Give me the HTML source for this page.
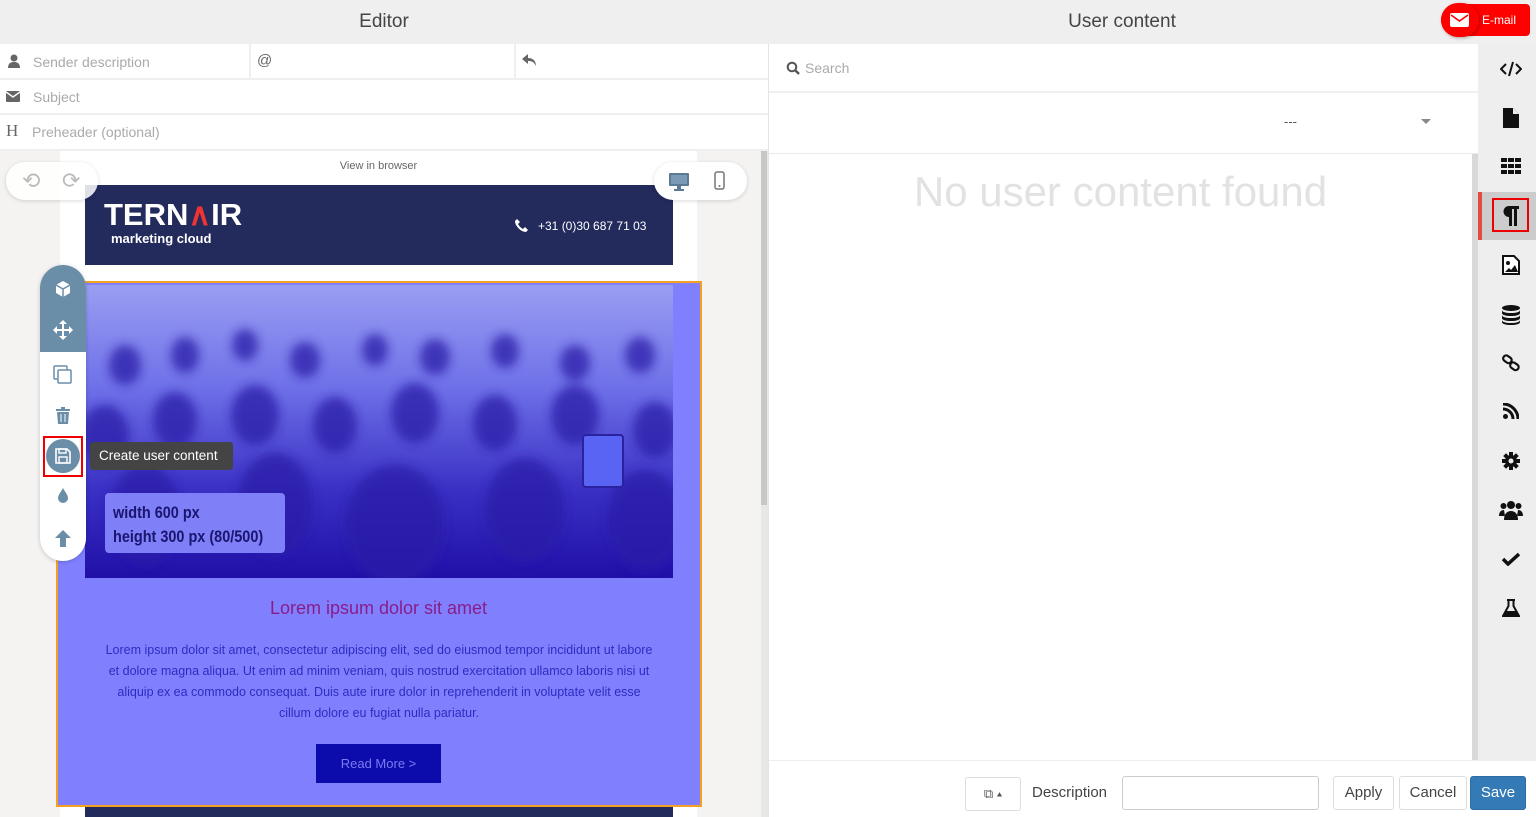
<!DOCTYPE html>
<html><head><meta charset="utf-8"><style>
*{box-sizing:border-box;margin:0;padding:0}
body{width:1536px;height:817px;overflow:hidden;font-family:"Liberation Sans",sans-serif;background:#fff;position:relative}
.a{position:absolute}
.hdr{background:#efefef;color:#444;font-size:19px;text-align:center;line-height:44px;height:44px}
.row{background:#fff;border-bottom:2px solid #efefef;color:#aaa;font-size:14px}
.btn{border:1px solid #ddd;border-radius:3px;background:#fff;font-size:15px;color:#444;text-align:center;line-height:32px;height:34px}
</style></head><body>
<div class="a hdr" style="left:0;top:0;width:768px">Editor</div>
<div class="a row" style="left:0;top:44px;width:768px;height:36px"></div>
<div class="a" style="left:249px;top:44px;width:2px;height:34px;background:#efefef"></div>
<div class="a" style="left:514px;top:44px;width:2px;height:34px;background:#efefef"></div>
<svg class="a" style="left:8px;top:54px" width="12" height="14" viewBox="0 0 12 14"><circle cx="6" cy="4" r="3.5" fill="#666"/><path d="M0 14c0-5 3-6 6-6s6 1 6 6z" fill="#666"/></svg>
<div class="a" style="left:33px;top:54px;font-size:14px;color:#aaa">Sender description</div>
<div class="a" style="left:257px;top:52px;font-size:15px;color:#666">@</div>
<svg class="a" style="left:522px;top:54px" width="14" height="12" viewBox="0 0 14 12"><path d="M6 0L0 5l6 5V7c4 0 6 1 8 5 0-5-3-8-8-8z" fill="#666"/></svg>
<div class="a row" style="left:0;top:80px;width:768px;height:35px"></div>
<svg class="a" style="left:6px;top:91px" width="14" height="11" viewBox="0 0 14 11"><rect width="14" height="11" rx="1" fill="#666"/><path d="M0 1l7 5 7-5" stroke="#fff" stroke-width="1.5" fill="none"/></svg>
<div class="a" style="left:33px;top:89px;font-size:14px;color:#aaa">Subject</div>
<div class="a row" style="left:0;top:115px;width:768px;height:36px"></div>
<div class="a" style="left:6px;top:121px;font-size:17px;color:#666;font-family:'Liberation Serif',serif">H</div>
<div class="a" style="left:32px;top:124px;font-size:14px;color:#aaa">Preheader (optional)</div>
<div class="a" style="left:0;top:151px;width:761px;height:666px;background:#f4f3f1"></div>
<div class="a" style="left:761px;top:151px;width:7px;height:666px;background:#e8e8e8"></div>
<div class="a" style="left:761px;top:151px;width:6px;height:354px;background:#c8c8c8"></div>
<div class="a" style="left:60px;top:151px;width:637px;height:666px;background:#fff"></div>
<div class="a" style="left:60px;top:160px;width:637px;text-align:center;font-size:11px;color:#666">View in browser</div>
<div class="a" style="left:85px;top:185px;width:588px;height:80px;background:#232a5c"></div>
<div class="a" style="left:104px;top:198px;font-size:31px;font-weight:bold;color:#fff;line-height:34px">TERN<span style="color:#e33">∧</span>IR</div>
<div class="a" style="left:111px;top:231px;font-size:13px;font-weight:bold;color:#fff">marketing cloud</div>
<svg class="a" style="left:515px;top:219px" width="13" height="13" viewBox="0 0 13 13"><path d="M2 0l3 3-2 2c1 2 3 4 5 5l2-2 3 3-2 2C6 13 0 7 0 2z" fill="#fff"/></svg>
<div class="a" style="left:538px;top:219px;font-size:12px;color:#fff">+31 (0)30 687 71 03</div>
<div class="a" style="left:6px;top:162px;width:92px;height:38px;border-radius:19px;background:rgba(255,255,255,.85);box-shadow:0 1px 4px rgba(0,0,0,.15)"></div>
<div class="a" style="left:22px;top:168px;font-size:22px;color:#bbb">⟲</div>
<div class="a" style="left:62px;top:168px;font-size:22px;color:#bbb">⟳</div>
<div class="a" style="left:654px;top:162px;width:93px;height:38px;border-radius:19px;background:#fff;box-shadow:0 1px 4px rgba(0,0,0,.15)"></div>
<svg class="a" style="left:668px;top:172px" width="22" height="19" viewBox="0 0 22 19"><rect x="1" y="1" width="20" height="13" rx="1" fill="#5a7a96"/><rect x="3" y="3" width="16" height="9" fill="#7a9ab6"/><rect x="9" y="14" width="4" height="3" fill="#5a7a96"/><rect x="6" y="17" width="10" height="2" fill="#5a7a96"/></svg>
<svg class="a" style="left:714px;top:171px" width="11" height="19" viewBox="0 0 11 19"><rect x="1" y="1" width="9" height="17" rx="2" fill="none" stroke="#777" stroke-width="1.5"/><circle cx="5.5" cy="15" r="1" fill="#777"/></svg>
<div class="a" style="left:56px;top:281px;width:646px;height:526px;border:2px solid #f4a020;background:#8080ff"></div>
<svg class="a" style="left:85px;top:285px" width="588" height="293" viewBox="0 0 588 293">
<defs><linearGradient id="g" x1="0" y1="0" x2="0" y2="1"><stop offset="0" stop-color="#9a9ef2"/><stop offset=".35" stop-color="#6e70e8"/><stop offset=".7" stop-color="#3a30c4"/><stop offset="1" stop-color="#2010a8"/></linearGradient><filter id="b"><feGaussianBlur stdDeviation="5"/></filter></defs>
<rect width="588" height="293" fill="url(#g)"/>
<g filter="url(#b)" fill="#2a1aa8" opacity=".75">
<ellipse cx="40" cy="80" rx="16" ry="20"/><ellipse cx="100" cy="70" rx="14" ry="18"/><ellipse cx="160" cy="60" rx="13" ry="16"/><ellipse cx="220" cy="75" rx="15" ry="18"/><ellipse cx="290" cy="65" rx="13" ry="16"/><ellipse cx="350" cy="72" rx="15" ry="18"/><ellipse cx="420" cy="66" rx="14" ry="17"/><ellipse cx="490" cy="78" rx="15" ry="18"/><ellipse cx="555" cy="70" rx="15" ry="18"/>
<ellipse cx="20" cy="150" rx="24" ry="30"/><ellipse cx="90" cy="135" rx="22" ry="28"/><ellipse cx="170" cy="130" rx="24" ry="30"/><ellipse cx="250" cy="140" rx="22" ry="28"/><ellipse cx="330" cy="128" rx="24" ry="30"/><ellipse cx="410" cy="138" rx="22" ry="28"/><ellipse cx="490" cy="130" rx="24" ry="30"/><ellipse cx="570" cy="145" rx="22" ry="28"/>
<ellipse cx="60" cy="230" rx="36" ry="50"/><ellipse cx="190" cy="220" rx="38" ry="52"/><ellipse cx="310" cy="240" rx="50" ry="60"/><ellipse cx="440" cy="225" rx="40" ry="52"/><ellipse cx="560" cy="235" rx="38" ry="50"/>
</g>
<rect x="498" y="150" width="40" height="52" rx="3" fill="#5a64f4" stroke="#2a22a0" stroke-width="2"/>
</svg>
<div class="a" style="left:105px;top:493px;width:180px;height:60px;background:#7f7ff8;border-radius:4px"></div>
<div class="a" style="left:113px;top:501px;font-size:17px;font-weight:bold;color:#1a1670;line-height:24px;transform:scaleX(.85);transform-origin:left">width 600 px<br>height 300 px (80/500)</div>
<div class="a" style="left:60px;top:598px;width:637px;text-align:center;font-size:18px;color:#8a1c8a">Lorem ipsum dolor sit amet</div>
<div class="a" style="left:98px;top:640px;width:562px;text-align:center;font-size:12.5px;line-height:21px;color:#2c2cc0">Lorem ipsum dolor sit amet, consectetur adipiscing elit, sed do eiusmod tempor incididunt ut labore<br>et dolore magna aliqua. Ut enim ad minim veniam, quis nostrud exercitation ullamco laboris nisi ut<br>aliquip ex ea commodo consequat. Duis aute irure dolor in reprehenderit in voluptate velit esse<br>cillum dolore eu fugiat nulla pariatur.</div>
<div class="a" style="left:316px;top:744px;width:125px;height:39px;background:#0c0cac;color:#7b7bf0;font-size:13px;text-align:center;line-height:39px">Read More &gt;</div>
<div class="a" style="left:85px;top:807px;width:588px;height:10px;background:#232a5c"></div>
<div class="a" style="left:40px;top:265px;width:46px;height:296px;border-radius:23px;background:#fff;box-shadow:0 1px 4px rgba(0,0,0,.2);overflow:hidden"><div style="height:87px;background:#6a8ea8"></div></div>
<svg class="a" style="left:54px;top:280px" width="18" height="18" viewBox="0 0 18 18"><path d="M9 1l7 4v8l-7 4-7-4V5z" fill="#fff"/><path d="M2 5l7 4 7-4M9 9v8" stroke="#6a8ea8" stroke-width="1.5" fill="none"/></svg>
<svg class="a" style="left:53px;top:320px" width="20" height="20" viewBox="0 0 20 20"><path d="M10 0l4 4h-3v5h5V6l4 4-4 4v-3h-5v5h3l-4 4-4-4h3v-5H4v3l-4-4 4-4v3h5V4H6z" fill="#fff"/></svg>
<svg class="a" style="left:53px;top:365px" width="20" height="20" viewBox="0 0 20 20"><rect x="1" y="1" width="13" height="13" rx="1" fill="none" stroke="#6a8ea8" stroke-width="1.5"/><rect x="5" y="5" width="13" height="13" rx="1" fill="#fff" stroke="#6a8ea8" stroke-width="1.5"/></svg>
<svg class="a" style="left:56px;top:407px" width="14" height="17" viewBox="0 0 14 17"><path d="M0 2h14v2H0zM5 0h4v2H5zM1 5h12l-1 12H2z" fill="#6a8ea8"/><path d="M5 7v8M9 7v8" stroke="#fff"/></svg>
<div class="a" style="left:43px;top:436px;width:40px;height:41px;border:2px solid #e00"></div>
<div class="a" style="left:46px;top:439px;width:34px;height:34px;border-radius:50%;background:#6a8ea8"></div>
<svg class="a" style="left:55px;top:448px" width="16" height="16" viewBox="0 0 16 16"><path d="M1 1h11l3 3v11H1z" fill="none" stroke="#fff" stroke-width="1.6"/><rect x="4" y="1" width="7" height="4" fill="none" stroke="#fff" stroke-width="1.4"/><rect x="4" y="9" width="8" height="6" fill="none" stroke="#fff" stroke-width="1.4"/></svg>
<div class="a" style="left:90px;top:442px;width:143px;height:28px;background:#444;border-radius:3px;color:#fff;font-size:13.5px;line-height:28px;padding-left:9px">Create user content</div>
<svg class="a" style="left:58px;top:488px" width="10" height="15" viewBox="0 0 10 15"><path d="M5 0C3 4 0 7 0 10a5 5 0 0010 0C10 7 7 4 5 0z" fill="#6a8ea8"/></svg>
<svg class="a" style="left:54px;top:530px" width="18" height="17" viewBox="0 0 18 17"><path d="M9 0l8 8h-5v9H6V8H1z" fill="#6a8ea8"/></svg>
<div class="a hdr" style="left:768px;top:0;width:768px;padding-right:60px">User content</div>
<div class="a" style="left:1441px;top:4px;width:89px;height:32px;border-radius:16px 4px 4px 16px;background:#f00"></div>
<div class="a" style="left:1441px;top:3px;width:38px;height:34px;border-radius:17px;background:#f00;box-shadow:1px 1px 3px rgba(0,0,0,.3)"></div>
<svg class="a" style="left:1450px;top:13px" width="19" height="14" viewBox="0 0 19 14"><rect width="19" height="14" rx="2" fill="#fff"/><path d="M1 2l8.5 6L18 2" stroke="#f00" stroke-width="1.6" fill="none"/></svg>
<div class="a" style="left:1482px;top:13px;font-size:12px;color:#fff">E-mail</div>
<div class="a" style="left:768px;top:44px;width:1px;height:773px;background:#e4e4e4"></div>
<div class="a" style="left:769px;top:44px;width:709px;height:49px;background:#fff;border-bottom:2px solid #f0f0f0"></div>
<svg class="a" style="left:786px;top:61px" width="14" height="14" viewBox="0 0 14 14"><circle cx="6" cy="6" r="4.3" fill="none" stroke="#555" stroke-width="2"/><path d="M9 9l4 4" stroke="#555" stroke-width="2.4"/></svg>
<div class="a" style="left:805px;top:60px;font-size:14px;color:#aaa">Search</div>
<div class="a" style="left:769px;top:93px;width:709px;height:61px;background:#fff;border-bottom:1px solid #eaeaea"></div>
<div class="a" style="left:1284px;top:114px;font-size:13px;color:#555">---</div>
<div class="a" style="left:1421px;top:119px;width:0;height:0;border-left:5px solid transparent;border-right:5px solid transparent;border-top:5px solid #888"></div>
<div class="a" style="left:769px;top:154px;width:703px;height:606px;background:#fff"></div>
<div class="a" style="left:1472px;top:154px;width:6px;height:606px;background:#d8d8d8"></div>
<div class="a" style="left:769px;top:168px;width:703px;text-align:center;font-size:42px;color:#e2e2e2">No user content found</div>
<div class="a" style="left:769px;top:760px;width:767px;height:57px;background:#fff;border-top:1px solid #eee"></div>
<div class="a btn" style="left:965px;top:777px;width:56px;font-size:13px;color:#555">⧉ ▴</div>
<div class="a" style="left:1032px;top:784px;font-size:15px;color:#444">Description</div>
<div class="a" style="left:1122px;top:776px;width:197px;height:34px;border:1px solid #ccc;border-radius:3px"></div>
<div class="a btn" style="left:1333px;top:776px;width:61px">Apply</div>
<div class="a btn" style="left:1399px;top:776px;width:68px">Cancel</div>
<div class="a btn" style="left:1470px;top:776px;width:56px;background:#337ab7;border-color:#2e6da4;color:#fff">Save</div>
<div class="a" style="left:1478px;top:44px;width:58px;height:716px;background:#eeeeee"></div>
<div class="a" style="left:1478px;top:192px;width:58px;height:48px;background:#cccccc"></div>
<div class="a" style="left:1478px;top:192px;width:4px;height:48px;background:#e54a3f"></div>
<div class="a" style="left:1492px;top:198px;width:37px;height:34px;border:2px solid #e00"></div>
<svg class="a" style="left:1500px;top:61px" width="22" height="16" viewBox="0 0 22 16"><path d="M6 3L1 8l5 5M16 3l5 5-5 5M13 1L9 15" stroke="#111" stroke-width="2" fill="none"/></svg>
<svg class="a" style="left:1503px;top:108px" width="16" height="20" viewBox="0 0 16 20"><path d="M0 0h10l6 6v14H0z" fill="#111"/><path d="M10 0v6h6" fill="#eee"/></svg>
<svg class="a" style="left:1501px;top:158px" width="20" height="16" viewBox="0 0 20 16"><g fill="#111"><rect x="0" y="0" width="6" height="4"/><rect x="7" y="0" width="6" height="4"/><rect x="14" y="0" width="6" height="4"/><rect x="0" y="6" width="6" height="4"/><rect x="7" y="6" width="6" height="4"/><rect x="14" y="6" width="6" height="4"/><rect x="0" y="12" width="6" height="4"/><rect x="7" y="12" width="6" height="4"/><rect x="14" y="12" width="6" height="4"/></g></svg>
<svg class="a" style="left:1503px;top:206px" width="16" height="20" viewBox="0 0 16 20"><path d="M6 0h10v3h-2v17h-3V3H9v17H6v-9a5.5 5.5 0 010-11z" fill="#111"/></svg>
<svg class="a" style="left:1502px;top:255px" width="18" height="20" viewBox="0 0 18 20"><path d="M1 1h11l5 5v13H1z" fill="#fff" stroke="#111" stroke-width="2"/><circle cx="6" cy="8" r="2" fill="#111"/><path d="M3 17l4-4 2 2 4-5 3 7z" fill="#111"/></svg>
<svg class="a" style="left:1502px;top:305px" width="18" height="20" viewBox="0 0 18 20"><g fill="#111"><ellipse cx="9" cy="3" rx="9" ry="3"/><path d="M0 5c0 2 4 3 9 3s9-1 9-3v3c0 2-4 3-9 3S0 10 0 8z"/><path d="M0 10c0 2 4 3 9 3s9-1 9-3v3c0 2-4 3-9 3s-9-1-9-3z"/><path d="M0 15c0 2 4 3 9 3s9-1 9-3v2c0 2-4 3-9 3s-9-1-9-3z"/></g></svg>
<svg class="a" style="left:1502px;top:354px" width="18" height="18" viewBox="0 0 18 18"><rect x="1" y="2" width="9" height="6" rx="3" transform="rotate(35 5 5)" fill="none" stroke="#111" stroke-width="2.2"/><rect x="8" y="9" width="9" height="6" rx="3" transform="rotate(35 12 12)" fill="none" stroke="#111" stroke-width="2.2"/></svg>
<svg class="a" style="left:1503px;top:403px" width="16" height="16" viewBox="0 0 16 16"><circle cx="2.5" cy="13.5" r="2.5" fill="#111"/><path d="M0 6a10 10 0 0110 10M0 1a15 15 0 0115 15" stroke="#111" stroke-width="3" fill="none"/></svg>
<svg class="a" style="left:1502px;top:452px" width="18" height="18" viewBox="0 0 18 18"><g fill="#111"><circle cx="9" cy="9" r="6"/><rect x="7" y="0" width="4" height="18"/><rect x="0" y="7" width="18" height="4"/><rect x="7" y="0" width="4" height="18" transform="rotate(45 9 9)"/><rect x="7" y="0" width="4" height="18" transform="rotate(-45 9 9)"/></g><circle cx="9" cy="9" r="2.5" fill="#eee"/></svg>
<svg class="a" style="left:1499px;top:500px" width="24" height="20" viewBox="0 0 24 20"><g fill="#111"><circle cx="12" cy="5" r="4"/><circle cx="4.5" cy="6" r="3"/><circle cx="19.5" cy="6" r="3"/><path d="M5 20c0-6 3-9 7-9s7 3 7 9z"/><path d="M0 16c0-4 2-6 5-6l1 6zM24 16c0-4-2-6-5-6l-1 6z"/></g></svg>
<svg class="a" style="left:1502px;top:552px" width="18" height="14" viewBox="0 0 18 14"><path d="M1 7l5 5L17 2" stroke="#111" stroke-width="3.5" fill="none"/></svg>
<svg class="a" style="left:1502px;top:599px" width="18" height="18" viewBox="0 0 18 18"><path d="M5 1h8M6.5 1v6L1 17h16L11.5 7V1" fill="none" stroke="#111" stroke-width="2"/><path d="M4 12h10l3 5H1z" fill="#111"/></svg>
</body></html>
